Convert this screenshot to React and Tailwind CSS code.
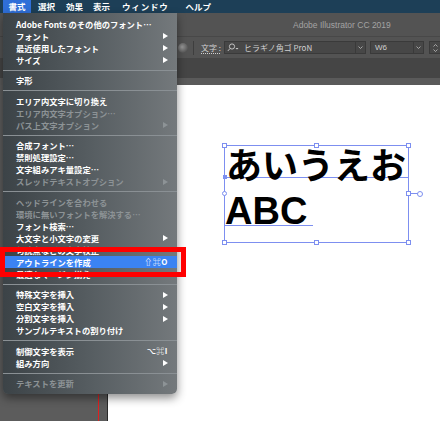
import React from 'react';

const JP = { fontFamily: '"Noto Sans CJK JP", "DejaVu Sans", sans-serif' };

// menu rows: t = text, d = disabled, sub = has submenu, k = shortcut, hl = highlighted, sep = separator
const menuItems = [
  { t: 'Adobe Fonts のその他のフォント…' },
  { t: 'フォント', sub: true },
  { t: '最近使用したフォント', sub: true },
  { t: 'サイズ', sub: true },
  { sep: true },
  { t: '字形' },
  { sep: true },
  { t: 'エリア内文字に切り換え' },
  { t: 'エリア内文字オプション…', d: true },
  { t: 'パス上文字オプション', d: true, sub: true },
  { sep: true },
  { t: '合成フォント…' },
  { t: '禁則処理設定…' },
  { t: '文字組みアキ量設定…' },
  { t: 'スレッドテキストオプション', d: true, sub: true },
  { sep: true },
  { t: 'ヘッドラインを合わせる', d: true },
  { t: '環境に無いフォントを解決する…', d: true },
  { t: 'フォント検索…' },
  { t: '大文字と小文字の変更', sub: true },
  { t: '句読点などの文字校正…' },
  { t: 'アウトラインを作成', k: '⇧⌘O', hl: true },
  { t: '最適なマージン揃え' },
  { sep: true },
  { t: '特殊文字を挿入', sub: true },
  { t: '空白文字を挿入', sub: true },
  { t: '分割文字を挿入', sub: true },
  { t: 'サンプルテキストの割り付け' },
  { sep: true },
  { t: '制御文字を表示', k: '⌥⌘I' },
  { t: '組み方向', sub: true },
  { sep: true },
  { t: 'テキストを更新', d: true, sub: true },
];

const Arrow = ({ dim }) => (
  <svg width="5" height="6" viewBox="0 0 5 6">
    <polygon points="0,0 5,3 0,6" fill={dim ? '#8d9396' : '#ffffff'} />
  </svg>
);

const Chevron = ({ up }) => (
  <svg width="5" height="3" viewBox="0 0 5 3">
    <polyline points={up ? '0.5,2.5 2.5,0.5 4.5,2.5' : '0.5,0.5 2.5,2.5 4.5,0.5'} fill="none" stroke="#bdbdbd" strokeWidth="0.8" />
  </svg>
);

const Handle = ({ className }) => (
  <div className={`absolute w-[5px] h-[5px] bg-white border border-[#7d8ff0] ${className}`} />
);

const TypeMenu = () => (
  <div
    className="absolute left-[3px] top-[13px] w-[174px] pt-[5px] pb-[4px] rounded-b-[5px] bg-gradient-to-r from-[#3c4347] via-[#565d61] to-[#74797c] shadow-[0_4px_10px_rgba(0,0,0,0.45)]"
    style={JP}
  >
    {menuItems.map((it, i) =>
      it.sep ? (
        <div key={i} className="h-[8.5px] flex items-center">
          <div className="w-full h-px bg-[#8a9094]" />
        </div>
      ) : (
        <div
          key={i}
          className={`h-[12px] flex items-center justify-between pl-[13px] pr-[9px] text-[8.3px] font-semibold leading-none ${
            it.hl ? 'bg-[#3b83f2] text-white' : it.d ? 'text-[#8d9396]' : 'text-white'
          }`}
        >
          <span className="whitespace-nowrap">{it.t}</span>
          {it.sub && <Arrow dim={it.d} />}
          {it.k && <span className="text-[8px] tracking-[0.5px]">{it.k}</span>}
        </div>
      )
    )}
  </div>
);

export default function App() {
  return (
    <div className="relative w-[440px] h-[421px] overflow-hidden bg-white" style={JP}>
      {/* mac menu bar */}
      <div className="h-[13px] bg-[#1d3f57] flex items-center text-[8.5px] font-semibold text-white leading-none whitespace-nowrap">
        <div className="ml-[3px] h-full w-[28px] bg-[#2f6fd8] flex items-center justify-center">書式</div>
        <span className="ml-[7px]">選択</span>
        <span className="ml-[11px]">効果</span>
        <span className="ml-[10px]">表示</span>
        <span className="ml-[12px] tracking-[0.8px]">ウィンドウ</span>
        <span className="ml-[17px]">ヘルプ</span>
      </div>

      {/* title bar */}
      <div className="h-[24px] bg-[#535353] border-b border-[#484848] flex items-center pl-[293px] pt-[2px]">
        <span className="text-[8.5px] text-[#a3a3a3]" style={{ fontFamily: '"Liberation Sans", sans-serif' }}>
          Adobe Illustrator CC 2019
        </span>
      </div>

      {/* control bar */}
      <div className="h-[21px] bg-[#535353] flex items-center text-[#d0d0d0] whitespace-nowrap">
        <div className="ml-[178px] shrink-0 w-[10px] h-[10px] rounded-full bg-[radial-gradient(circle_at_40%_40%,#9a9a9a,#3a3a3a)]" />
        <div className="ml-[5px] shrink-0 w-px h-[14px] bg-[#3e3e3e]" />
        <span className="ml-[7px] shrink-0 text-[8px] underline decoration-dotted underline-offset-2">文字 :</span>
        <div className="ml-[3px] shrink-0 w-[142px] h-[13px] bg-[#474747] border border-[#3a3a3a] flex items-center">
          <svg width="12" height="9" viewBox="0 0 12 9" className="ml-[2px]">
            <circle cx="5" cy="3.5" r="2.6" fill="none" stroke="#cfcfcf" strokeWidth="0.9" />
            <line x1="3" y1="5.5" x2="0.8" y2="8" stroke="#cfcfcf" strokeWidth="0.9" />
            <polygon points="8.5,5 11.5,5 10,6.6" fill="#cfcfcf" />
          </svg>
          <span className="ml-[5px] text-[8px] flex-1">ヒラギノ角ゴ ProN</span>
          <div className="w-[10px] h-full border-l border-[#3a3a3a] flex items-center justify-center">
            <Chevron />
          </div>
        </div>
        <div className="ml-[4px] shrink-0 w-[54px] h-[13px] bg-[#474747] border border-[#3a3a3a] flex items-center">
          <span className="ml-[4px] text-[8px] flex-1" style={{ fontFamily: '"Liberation Sans", sans-serif' }}>W6</span>
          <div className="w-[10px] h-full border-l border-[#3a3a3a] flex items-center justify-center">
            <Chevron />
          </div>
        </div>
        <div className="ml-[5px] shrink-0 w-[12px] h-[13px] bg-[#474747] border border-[#3a3a3a] flex flex-col items-center justify-center gap-[2px]">
          <Chevron up />
          <Chevron />
        </div>
      </div>

      {/* panel strips */}
      <div className="h-[20px] bg-[#454545]" />
      <div className="h-[7px] bg-[#5a5a5a]" />

      {/* work area */}
      <div className="flex h-[336px]">
        <div className="w-[108px] h-full bg-[#5c5c5c] border-r border-[#2a2a2a] flex">
          <div className="ml-[98px] w-px h-full bg-[#e02020]" />
        </div>
        <div className="flex-1 h-full bg-white pl-[116px] pt-[60px]">
          {/* selected text frame */}
          <div className="relative w-[185px] h-[98px] border border-[#7d8ff0]">
            <div className="h-[32px] border-b border-[#7d8ff0] flex items-end overflow-visible">
              <span className="ml-[1px] -mb-[4px] text-[36px] font-bold leading-none text-black whitespace-nowrap">あいうえお</span>
            </div>
            <div className="w-[88px] h-[48px] border-b border-[#7d8ff0] flex items-end">
              <span className="-mb-[5px] text-[38px] font-bold leading-none text-black" style={{ fontFamily: '"Liberation Sans", sans-serif' }}>ABC</span>
            </div>
            <Handle className="-left-[3px] -top-[3px]" />
            <Handle className="left-[89px] -top-[3px]" />
            <Handle className="-right-[3px] -top-[3px]" />
            <Handle className="-left-[3px] -bottom-[3px]" />
            <Handle className="left-[89px] -bottom-[3px]" />
            <Handle className="-right-[3px] -bottom-[3px]" />
            <Handle className="-right-[3px] top-[45px]" />
            <div className="absolute -left-[3px] top-[45px] w-[5px] h-[5px] rounded-full bg-white border border-[#7d8ff0]" />
            <div className="absolute -left-[2px] top-[29px] w-[4px] h-[4px] bg-[#7d8ff0]" />
            <div className="absolute -right-[10px] top-[47px] w-[7px] h-px bg-[#7d8ff0]" />
            <div className="absolute -right-[15px] top-[45px] w-[6px] h-[6px] rounded-full bg-white border border-[#7d8ff0]" />
          </div>
        </div>
      </div>

      <TypeMenu />

      {/* red annotation box */}
      <div className="absolute left-0 top-[247px] w-[186px] h-[30px] border-[5px] border-[#ff0000]" />
    </div>
  );
}
